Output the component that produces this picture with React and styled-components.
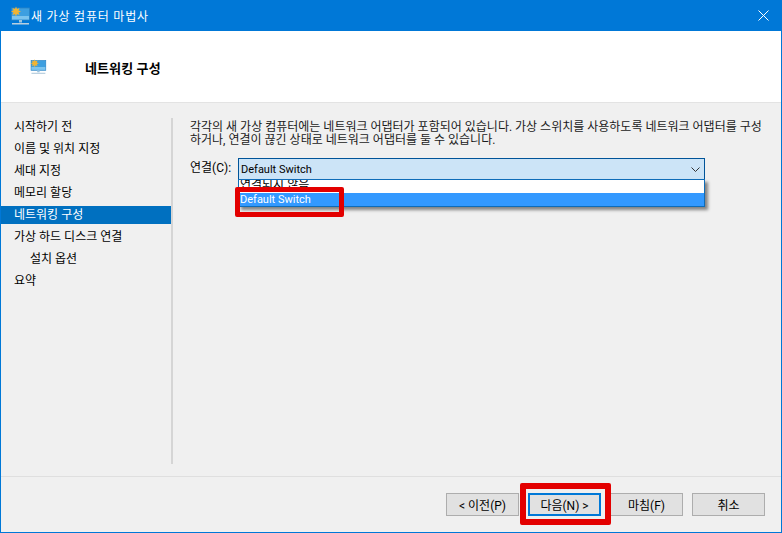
import React from 'react';
import styled, { createGlobalStyle } from 'styled-components';

const Global = createGlobalStyle`
  html, body { margin: 0; padding: 0; background: #f0f0f0; }
  * { box-sizing: border-box; }
`;

const Window = styled.div`
  position: relative;
  width: 782px;
  height: 533px;
  display: flex;
  flex-direction: column;
  border: 1px solid #0078d7;
  border-top: 0;
  background: #f0f0f0;
  overflow: hidden;
  font-family: Roboto, "Noto Sans CJK KR", sans-serif;
  font-size: 12px;
  color: #000;
`;

const TitleBar = styled.div`
  height: 31px;
  flex: none;
  display: flex;
  align-items: center;
  background: #0078d7;
  padding: 0 12px 0 8px;
  color: #fff;
  font-size: 12px;
  letter-spacing: 0.8px;
`;

const TitleText = styled.span`
  margin-left: 0;
  flex: 1;
`;

const Header = styled.div`
  height: 72px;
  flex: none;
  display: flex;
  align-items: center;
  background: #fff;
  padding: 0 0 0 28px;
  border-bottom: 1px solid #e3e3e3;
`;

const HeaderTitle = styled.h1`
  margin: 1px 0 0 38px;
  font-size: 13px;
  font-weight: 700;
  letter-spacing: 0.1px;
`;

const Body = styled.div`
  flex: 1;
  display: flex;
  padding-top: 15px;
  min-height: 0;
`;

const Sidebar = styled.nav`
  width: 172px;
  height: 346px;
  flex: none;
  border-right: 2px solid #d5d5d5;
`;

const NavItem = styled.div`
  height: 18px;
  margin-bottom: 4px;
  width: 170px;
  padding-left: ${(p) => (p.$indent ? 29 : 13)}px;
  line-height: 19px;
  white-space: nowrap;
  background: ${(p) => (p.$active ? '#0070c0' : 'transparent')};
  color: ${(p) => (p.$active ? '#fff' : '#000')};
`;

const Content = styled.div`
  flex: 1;
  padding: 3px 0 0 17px;
`;

const Intro = styled.p`
  margin: 0;
  width: 576px;
  line-height: 13px;
  font-size: 12px;
  color: #1a1a1a;
`;

const FieldRow = styled.div`
  display: flex;
  margin-top: 11px;
`;

const FieldLabel = styled.label`
  width: 48px;
  line-height: 21px;
  flex: none;
`;

const Combo = styled.div`
  position: relative;
  width: 467px;
  height: 22px;
  display: flex;
  align-items: center;
  justify-content: space-between;
  padding: 0 4px 0 2px;
  background: #cce4f7;
  border: 1px solid #005499;
`;

const Latin = styled.span`
  font-size: 11px;
`;

const Dropdown = styled.div`
  position: absolute;
  top: 20px;
  left: -1px;
  width: 467px;
  height: 28px;
  background: #fff;
  border: 1px solid #0f6cb8;
  box-shadow: 3px 3px 3px rgba(0, 0, 0, 0.45);
`;

const Option = styled.div`
  height: 13px;
  overflow: hidden;
  padding-left: 1px;
  line-height: ${(p) => (p.$selected ? 13 : 10)}px;
  white-space: nowrap;
  background: ${(p) => (p.$selected ? '#3399ff' : '#fff')};
  color: ${(p) => (p.$selected ? '#fff' : '#000')};
`;

const Footer = styled.div`
  height: 56px;
  flex: none;
  display: flex;
  justify-content: flex-end;
  gap: 9px;
  padding: 16px 16px 0 0;
  border-top: 1px solid #dfdfdf;
`;

const Button = styled.button`
  width: 73px;
  height: 23px;
  padding: 0;
  font: inherit;
  color: #000;
  background: #e1e1e1;
  border: ${(p) => (p.$primary ? '2px solid #0078d7' : '1px solid #adadad')};
`;

const Highlight = styled.div`
  position: absolute;
  border: ${(p) => p.$width}px solid #e30000;
  border-radius: 2px;
`;

const ComboHighlight = styled(Highlight)`
  left: 234px;
  top: 187px;
  width: 109px;
  height: 30px;
`;

const NextHighlight = styled(Highlight)`
  left: 519px;
  top: 483px;
  width: 91px;
  height: 42px;
`;

const MonitorIcon = ({ size = 22 }) => (
  <svg width={size} height={size} viewBox="0 0 22 22">
    <rect x="2.5" y="3" width="18" height="12" fill="#3d9fe0" stroke="#2b83c4" strokeWidth="0.8" />
    <rect x="3" y="11" width="17" height="3.5" fill="#7cc4ee" />
    <path d="M7 1.5 L8 4 L10.5 3 L9.5 5.5 L12 6.5 L9.5 7.5 L10.5 10 L8 9 L7 11.5 L6 9 L3.5 10 L4.5 7.5 L2 6.5 L4.5 5.5 L3.5 3 L6 4 Z" fill="#f2b431" />
    <rect x="10" y="15" width="3" height="2.5" fill="#9cc4e0" />
    <rect x="3" y="18" width="17" height="1.5" fill="#b9cfdf" />
  </svg>
);

const nav = ['시작하기 전', '이름 및 위치 지정', '세대 지정', '메모리 할당', '네트워킹 구성', '가상 하드 디스크 연결', '설치 옵션', '요약'];

export default function App() {
  return (
    <>
      <Global />
      <Window>
        <TitleBar>
          <MonitorIcon />
          <TitleText>새 가상 컴퓨터 마법사</TitleText>
          <svg width="11" height="11" viewBox="0 0 11 11">
            <path d="M0.5 0.5 L10.5 10.5 M10.5 0.5 L0.5 10.5" stroke="#fff" strokeWidth="1" />
          </svg>
        </TitleBar>
        <Header>
          <MonitorIcon size={18} />
          <HeaderTitle>네트워킹 구성</HeaderTitle>
        </Header>
        <Body>
          <Sidebar>
            {nav.map((item, i) => (
              <NavItem key={item} $active={i === 4} $indent={i === 6}>{item}</NavItem>
            ))}
          </Sidebar>
          <Content>
            <Intro>
              각각의 새 가상 컴퓨터에는 네트워크 어댑터가 포함되어 있습니다. 가상 스위치를 사용하도록 네트워크 어댑터를 구성하거나, 연결이 끊긴 상태로 네트워크 어댑터를 둘 수 있습니다.
            </Intro>
            <FieldRow>
              <FieldLabel>연결(C):</FieldLabel>
              <Combo>
                <Latin>Default Switch</Latin>
                <svg width="9" height="5" viewBox="0 0 9 5">
                  <path d="M0.5 0.5 L4.5 4.5 L8.5 0.5" fill="none" stroke="#333" strokeWidth="1" />
                </svg>
                <Dropdown>
                  <Option>연결되지 않음</Option>
                  <Option $selected><Latin>Default Switch</Latin></Option>
                </Dropdown>
              </Combo>
            </FieldRow>
          </Content>
        </Body>
        <Footer>
          <Button>&lt; 이전(P)</Button>
          <Button $primary>다음(N) &gt;</Button>
          <Button>마침(F)</Button>
          <Button>취소</Button>
        </Footer>
        <ComboHighlight $width={5} />
        <NextHighlight $width={6} />
      </Window>
    </>
  );
}
